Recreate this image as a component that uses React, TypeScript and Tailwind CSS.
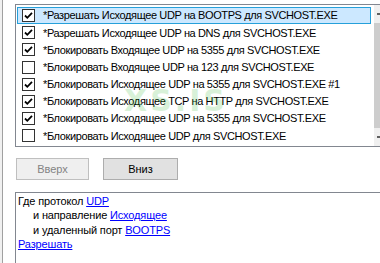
const rules: { checked: boolean; text: string }[] = [
  { checked: true, text: "*Разрешать Исходящее UDP на BOOTPS для SVCHOST.EXE" },
  { checked: true, text: "*Разрешать Исходящее UDP на DNS для SVCHOST.EXE" },
  { checked: true, text: "*Блокировать Входящее UDP на 5355 для SVCHOST.EXE" },
  { checked: false, text: "*Блокировать Входящее UDP на 123 для SVCHOST.EXE" },
  { checked: true, text: "*Блокировать Исходящее UDP на 5355 для SVCHOST.EXE #1" },
  { checked: true, text: "*Блокировать Исходящее TCP на HTTP для SVCHOST.EXE" },
  { checked: true, text: "*Блокировать Исходящее UDP на 5355 для SVCHOST.EXE" },
  { checked: false, text: "*Блокировать Исходящее UDP для SVCHOST.EXE" },
];

const CheckBox = ({ checked }: { checked: boolean }) => (
  <svg width="13" height="13" viewBox="0 0 13 13" className="shrink-0">
    <rect x="0.5" y="0.5" width="12" height="12" fill="#fff" stroke="#333" />
    {checked && (
      <path d="M3 6.5 L5.3 8.8 L10 3.8" fill="none" stroke="#000" strokeWidth="1.8" />
    )}
  </svg>
);

const Link = ({ children }: { children: string }) => (
  <span className="text-[#0000ff] underline">{children}</span>
);

export default function App() {
  return (
    <div className="w-[380px] h-[263px] bg-white flex overflow-hidden relative font-['Liberation_Sans',Arial,sans-serif] text-[11px] text-black">
      <div className="w-[2px] bg-[#f0f0f0]" />
      <div className="w-px bg-[#a0a0a0]" />
      <div className="flex-1 pl-[12px] pt-[4px] flex flex-col">
        <div className="h-[143px] border-y border-l border-[#828790] flex">
          <div className="flex-1 pl-px pt-[2px] flex flex-col">
            {rules.map((r, i) => (
              <div
                key={i}
                className={
                  i === 0
                    ? "h-[17.2px] flex items-center border border-[#26a0da] bg-[#cce8ff]"
                    : "h-[17.2px] flex items-center border border-transparent"
                }
              >
                <div className="ml-[4px]">
                  <CheckBox checked={r.checked} />
                </div>
                <span className="ml-[8px] whitespace-nowrap tracking-[-0.38px]">{r.text}</span>
              </div>
            ))}
          </div>
          <div className="w-[3px]" />
          <div className="w-[6px] flex flex-col bg-[#f0f0f0]">
            <div className="h-[18px] flex items-center justify-end">
              <div className="w-[3px] h-[2px] bg-[#606060]" />
            </div>
            <div className="flex-1 bg-[#cdcdcd]" />
            <div className="h-[18px] flex items-center justify-end">
              <div className="w-[3px] h-[2px] bg-[#606060]" />
            </div>
          </div>
        </div>
        <div className="mt-[11px] flex gap-[14px] pl-px">
          <div className="w-[73px] h-[22px] border border-[#bfbfbf] bg-[#efefef] text-[#838383] flex items-center justify-center">
            Вверх
          </div>
          <div className="w-[75px] h-[22px] border border-[#adadad] bg-[#e1e1e1] flex items-center justify-center">
            Вниз
          </div>
        </div>
        <div className="mt-[12px] flex-1 border-t border-l border-[#828790] pl-[2px] pt-px leading-[14.4px] tracking-[-0.15px]">
          <div>
            Где протокол <Link>UDP</Link>
          </div>
          <div className="pl-[15px]">
            и направление <Link>Исходящее</Link>
          </div>
          <div className="pl-[15px]">
            и удаленный порт <Link>BOOTPS</Link>
          </div>
          <div>
            <Link>Разрешать</Link>
          </div>
        </div>
      </div>
      <div className="absolute left-[124px] top-[78px] text-[30px] font-bold tracking-[3px] text-[#2db52d] opacity-[0.18] pointer-events-none font-['DejaVu_Sans',sans-serif]">
        XS.IS
      </div>
    </div>
  );
}
